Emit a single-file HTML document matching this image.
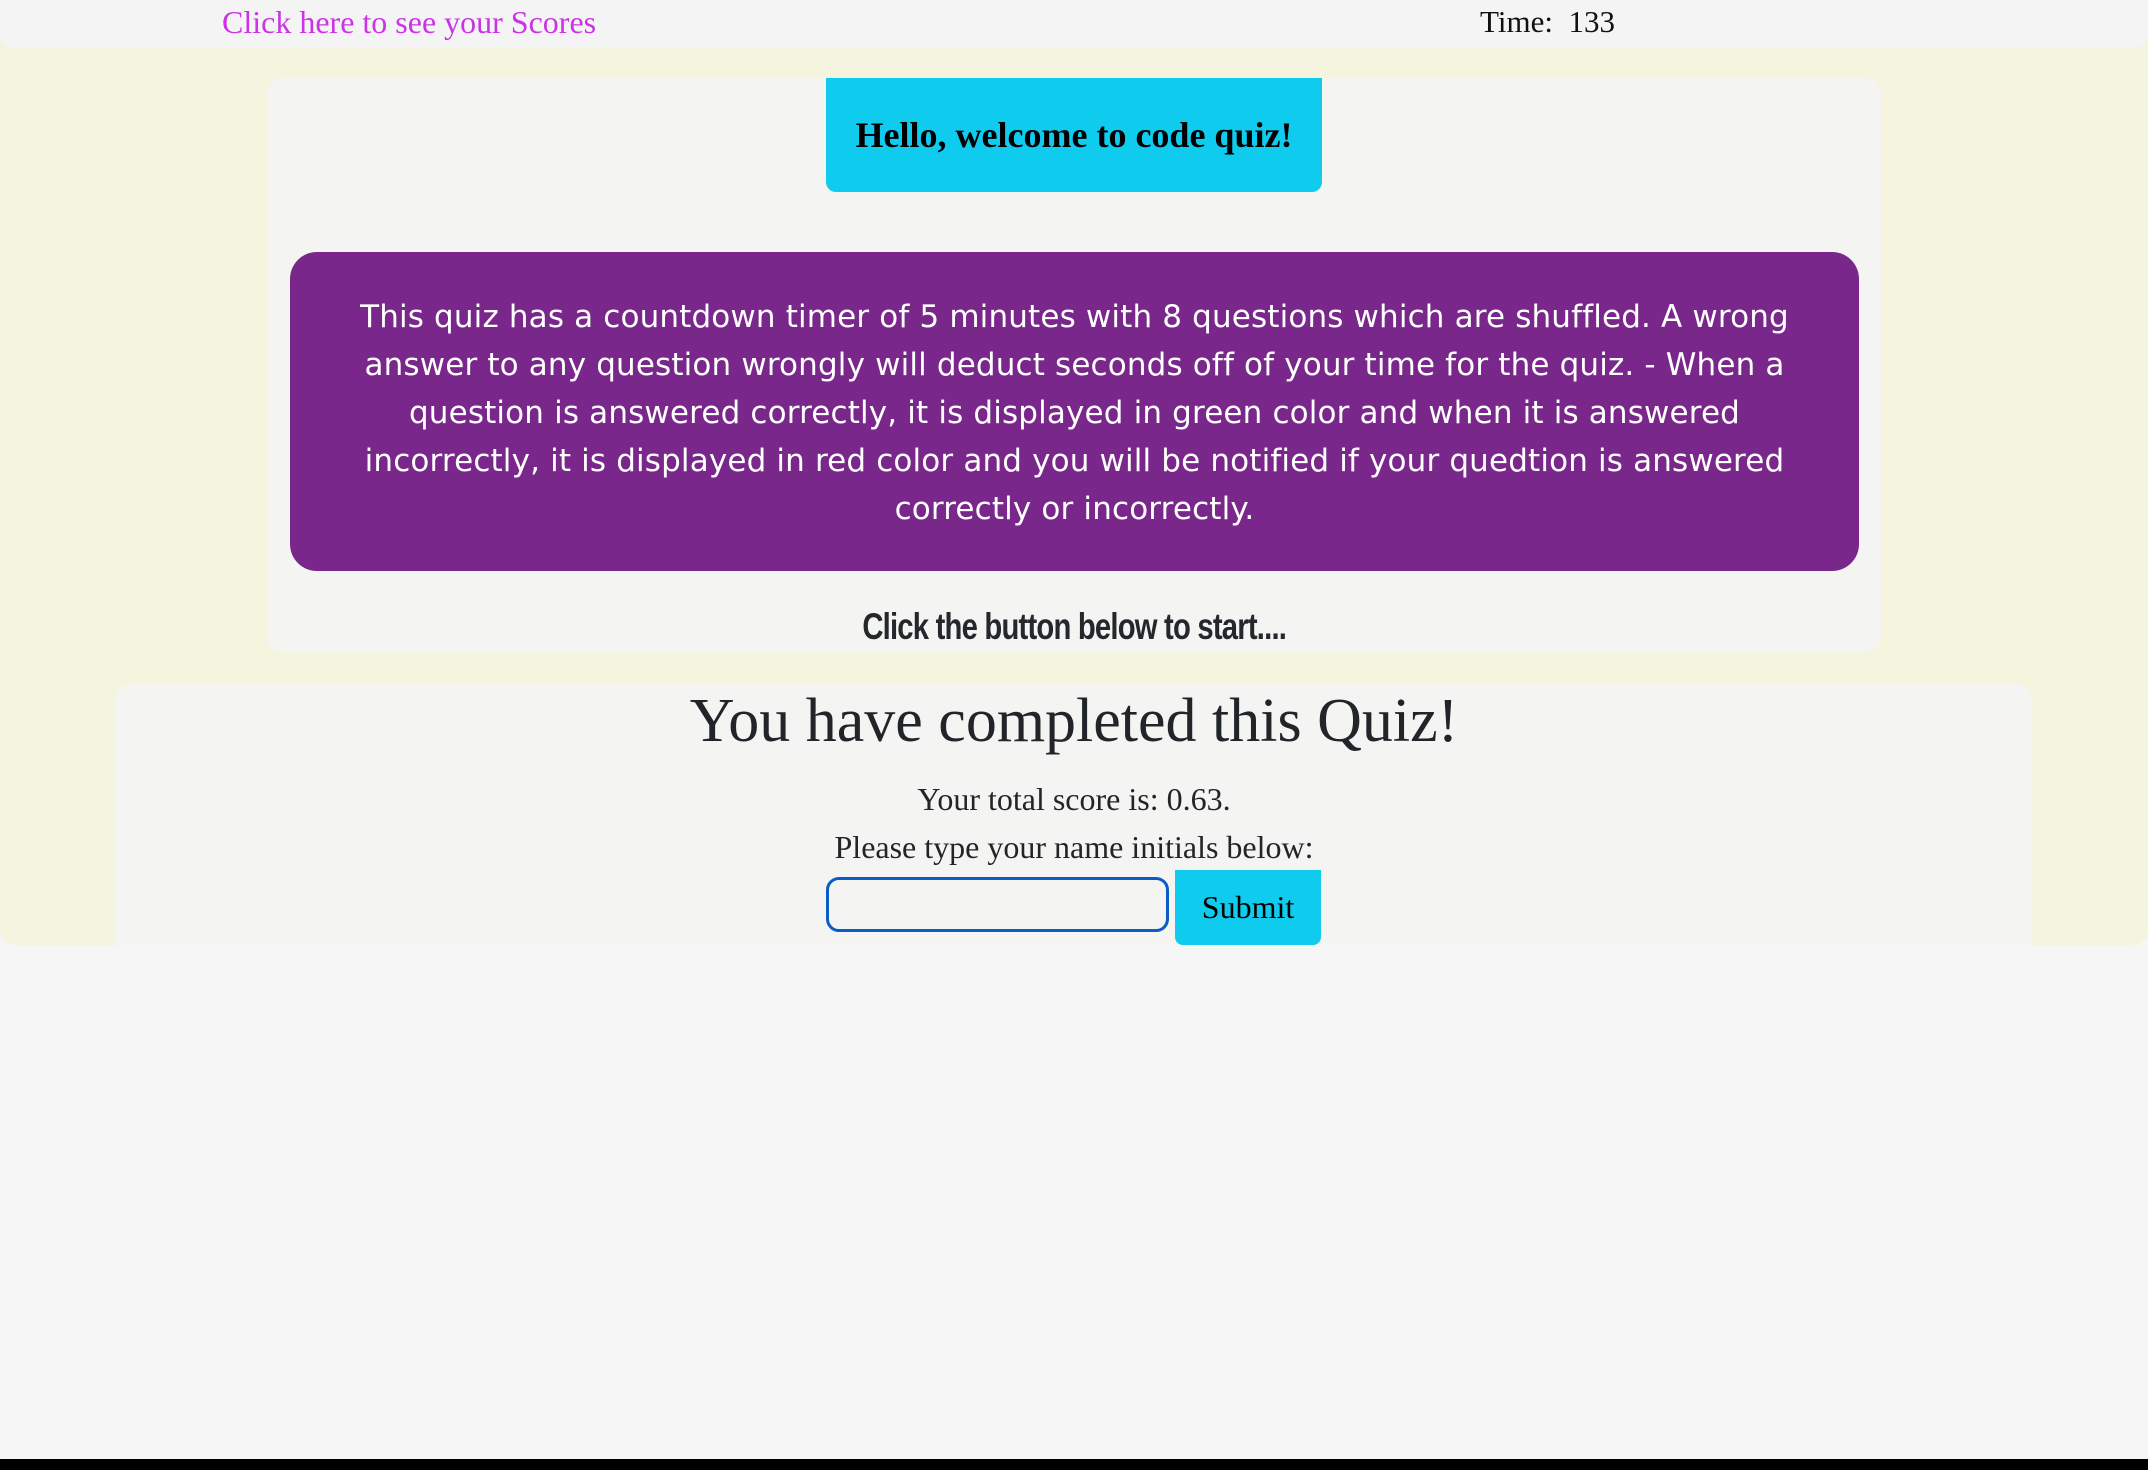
<!DOCTYPE html>
<html><head><meta charset="utf-8"><style>
*{margin:0;padding:0;box-sizing:border-box}
body{width:2148px;height:1470px;background:#f6f6f6;position:relative;overflow:hidden;font-family:"Liberation Serif",serif;color:#212529}
.abs{position:absolute}
#top{left:0;top:0;width:2148px;height:47px;background:#f4f4f4;border-radius:0 0 12px 12px;z-index:1}
#beige{left:0;top:40px;width:2148px;height:905px;background:#f5f5df;border-radius:0 0 14px 14px}
#card1{left:267px;top:78px;width:1614px;height:574px;background:#f4f4f2;border-radius:16px}
#cyan{left:826px;top:78px;width:496px;height:114px;background:#0fcbed;border-radius:0 0 10px 10px;display:flex;align-items:center;justify-content:center;font-weight:bold;font-size:36px;color:#000}
#purple{left:290px;top:252px;width:1569px;height:319px;background:#79278b;border-radius:27px;color:#fff;font-family:"DejaVu Sans",sans-serif;font-size:31px;line-height:48px;text-align:center;padding:41px 64px 0;letter-spacing:0.15px}
#start{left:0;width:2148px;top:606px;text-align:center;font-family:"Liberation Sans",sans-serif;font-weight:bold;font-size:37px;color:#24272b;letter-spacing:-1px}
#start span{display:inline-block;transform:scaleX(0.79)}
#card2{left:116px;top:684px;width:1916px;height:261px;background:#f4f4f2;border-radius:16px 16px 0 0}
.c{left:0;width:2148px;text-align:center}
#input{left:826px;top:877px;width:343px;height:55px;border:3px solid #0a5cc6;border-radius:13px;background:#f4f4f2}
#submit{left:1175px;top:870px;width:146px;height:75px;background:#0fcbed;border-radius:0 0 8px 8px;font-size:32px;color:#000;display:flex;align-items:center;justify-content:center}
#dock{left:0;top:1459px;width:2148px;height:11px;background:#000}
</style></head><body>
<div class="abs" id="top"></div>
<div class="abs" id="beige"></div>
<div class="abs" style="left:222px;top:4px;font-size:32px;color:#cc33e6;z-index:2">Click here to see your Scores</div>
<div class="abs" style="left:1480px;top:4px;font-size:31px;color:#111;z-index:2">Time:&nbsp; 133</div>
<div class="abs" id="card1"></div>
<div class="abs" id="cyan">Hello, welcome to code quiz!</div>
<div class="abs" id="purple">This quiz has a countdown timer of 5 minutes with 8 questions which are shuffled. A wrong answer to any question wrongly will deduct seconds off of your time for the quiz. - When a question is answered correctly, it is displayed in green color and when it is answered incorrectly, it is displayed in red color and you will be notified if your quedtion is answered correctly or incorrectly.</div>
<div class="abs" id="start"><span>Click the button below to start....</span></div>
<div class="abs" id="card2"></div>
<div class="abs c" style="top:685px;font-size:62px;line-height:72px">You have completed this Quiz!</div>
<div class="abs c" style="top:779px;font-size:32px;line-height:40px">Your total score is: 0.63.</div>
<div class="abs c" style="top:827px;font-size:32px;line-height:40px">Please type your name initials below:</div>
<div class="abs" id="input"></div>
<div class="abs" id="submit">Submit</div>
<div class="abs" id="dock"></div>
</body></html>
